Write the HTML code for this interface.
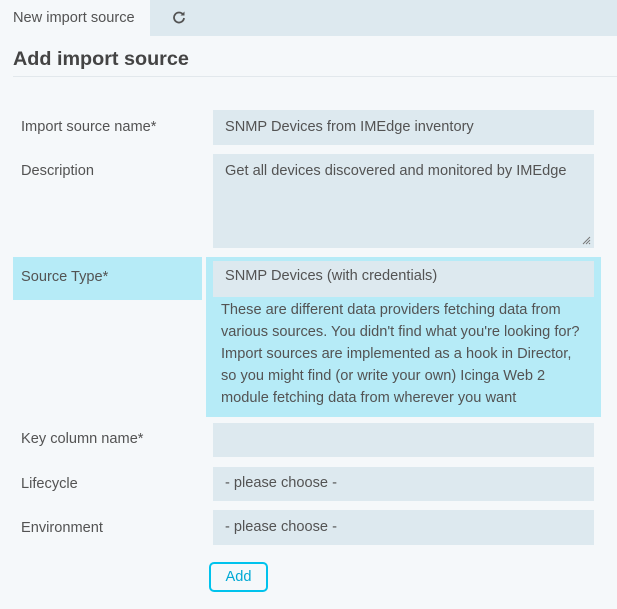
<!DOCTYPE html>
<html><head><style>
*{box-sizing:border-box;margin:0;padding:0}
body{width:617px;height:609px;background:#f5f8fa;font-family:"Liberation Sans",sans-serif;font-size:14.6px;color:#535353;position:relative;overflow:hidden}
.a{position:absolute}
.tabbar{left:0;top:0;width:617px;height:36px;background:#dde9ef}
.tab{left:0;top:0;width:150px;height:36px;background:#f5f8fa;padding:10px 0 0 13px}
.inp{background:#dde9ef;left:213px;width:381px;padding:0 12px;line-height:35px}
.lbl{left:21px}
</style></head><body>
<div class="a tabbar"></div>
<div class="a tab">New import source</div>
<svg class="a" style="left:172px;top:10px" width="14" height="14" viewBox="0 0 14 14"><path d="M11 4.5A5 5 0 1 0 12 8" fill="none" stroke="#535353" stroke-width="1.8"/><path d="M12.5 1.5v4h-4z" fill="#535353"/></svg>
<div class="a" style="left:13px;top:48px;font-size:19.8px;font-weight:bold;color:#444">Add import source</div>
<div class="a" style="left:13px;top:76px;width:604px;height:1px;background:#e2e8ec"></div>

<div class="a lbl" style="top:119px">Import source name*</div>
<div class="a inp" style="top:110px;height:35px">SNMP Devices from IMEdge inventory</div>

<div class="a lbl" style="top:163px">Description</div>
<div class="a inp" style="top:154px;height:94px;line-height:35px">Get all devices discovered and monitored by IMEdge</div>
<svg class="a" style="left:582px;top:236px" width="9" height="9"><path d="M1 8L8 1M4 8L8 4M7 8L8 7" stroke="#777" stroke-width="1"/></svg>

<div class="a" style="left:13px;top:257px;width:189px;height:43px;background:#b6ebf7;padding:12px 8px">Source Type*</div>
<div class="a" style="left:206px;top:257px;width:395px;height:160px;background:#b6ebf7"></div>
<div class="a inp" style="top:261px;height:36px;line-height:31px">SNMP Devices (with credentials)</div>
<div class="a" style="left:221px;top:299px;width:380px;line-height:22px;white-space:nowrap">These are different data providers fetching data from<br>various sources. You didn't find what you're looking for?<br>Import sources are implemented as a hook in Director,<br>so you might find (or write your own) Icinga Web 2<br>module fetching data from wherever you want</div>

<div class="a lbl" style="top:431px">Key column name*</div>
<div class="a inp" style="top:423px;height:34px"></div>

<div class="a lbl" style="top:476px">Lifecycle</div>
<div class="a inp" style="top:467px;height:34px;line-height:33px">- please choose -</div>

<div class="a lbl" style="top:520px">Environment</div>
<div class="a inp" style="top:510px;height:35px;line-height:34px">- please choose -</div>

<div class="a" style="left:209px;top:562px;width:59px;height:30px;border:2px solid #00c3ed;border-radius:5px;color:#00a9d4;text-align:center;line-height:27px;background:#f5f8fa">Add</div>
</body></html>
